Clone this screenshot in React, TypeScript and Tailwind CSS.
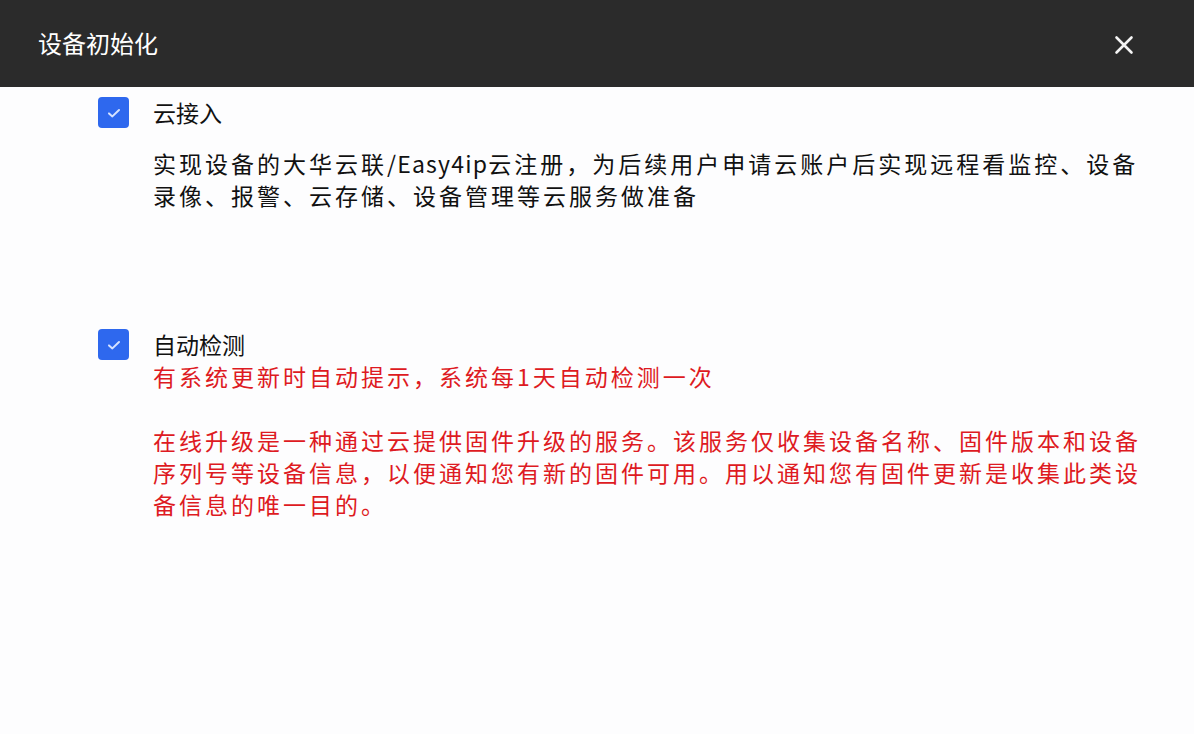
import React from "react";

function Check() {
  return (
    <div className="w-[31px] h-[31px] shrink-0 rounded-[4px] bg-[#2e68ee] flex items-center justify-center">
      <svg width="16" height="12" viewBox="0 0 16 12" fill="none">
        <path d="M3 6.4 L6.4 9.4 L13 3" stroke="#d6e2ff" strokeWidth="2" strokeLinecap="round" strokeLinejoin="round" />
      </svg>
    </div>
  );
}

export default function App() {
  const font = { fontFamily: '"Noto Sans CJK SC", "Noto Sans", sans-serif' };
  return (
    <div className="w-[1194px] h-[734px] bg-[#fdfdfe] overflow-hidden" style={font}>
      <div className="h-[87px] bg-[#2b2b2b] flex items-center justify-between pl-[38px] pr-[60px]">
        <div className="text-[24px] text-white leading-none pb-[2px]">设备初始化</div>
        <svg width="20" height="20" viewBox="0 0 20 20" className="mt-[2px]">
          <path d="M2.5 2.5 L17.5 17.5 M17.5 2.5 L2.5 17.5" stroke="#f4f4f4" strokeWidth="2.6" strokeLinecap="round" />
        </svg>
      </div>
      <div className="pl-[98px] pt-[9px]">
        <div className="flex gap-[24px]">
          <div className="pt-[1px]"><Check /></div>
          <div>
            <div className="text-[23px] leading-[32px] text-[#111111]">云接入</div>
            <div className="mt-[19px] text-[23px] leading-[32px] text-[#111111] tracking-[3px]">
              实现设备的大华云联<span className="tracking-[1.2px]">/Easy4ip</span>云注册，为后续用户申请云账户后实现远程看监控、设备
              <br />
              录像、报警、云存储、设备管理等云服务做准备
            </div>
          </div>
        </div>
        <div className="flex gap-[24px] mt-[117px]">
          <div className="pt-[1px]"><Check /></div>
          <div>
            <div className="text-[23px] leading-[32px] text-[#111111]">自动检测</div>
            <div className="text-[23px] leading-[32px] text-[#de1a22] tracking-[3px]">
              有系统更新时自动提示，系统每1天自动检测一次
            </div>
            <div className="mt-[32px] text-[23px] leading-[32px] text-[#de1a22] tracking-[3px]">
              在线升级是一种通过云提供固件升级的服务。该服务仅收集设备名称、固件版本和设备
              <br />
              序列号等设备信息，以便通知您有新的固件可用。用以通知您有固件更新是收集此类设
              <br />
              备信息的唯一目的。
            </div>
          </div>
        </div>
      </div>
    </div>
  );
}
